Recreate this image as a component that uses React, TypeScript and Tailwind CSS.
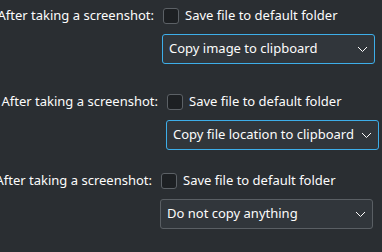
import React from "react";

function Chevron() {
  return (
    <svg width="11" height="7" viewBox="0 0 11 7" className="shrink-0">
      <path d="M1 1 L5.5 5.5 L10 1" fill="none" stroke="#fcfcfc" strokeWidth="1" />
    </svg>
  );
}

function Section({ offset, top, focused, value }: { offset: string; top: string; focused?: boolean; value: string }) {
  return (
    <div className={`flex ${offset} ${top}`}>
      <div className="w-[162px] shrink-0 h-4 flex items-center justify-end pr-[8px] whitespace-nowrap">
        After taking a screenshot:
      </div>
      <div className="flex flex-col">
        <div className="flex items-center h-4 gap-[6px] pl-[1px]">
          <span className="w-4 h-4 rounded-[3px] border border-[#5c6166] bg-[#1d2023]" />
          <span className="whitespace-nowrap">Save file to default folder</span>
        </div>
        <div
          className={`mt-[10px] w-[213px] h-[30px] rounded-[3px] border bg-[#31363b] flex items-center justify-between pl-[6px] pr-[6px] ${
            focused ? "border-[#3daee9]" : "border-[#5a5f64]"
          }`}
        >
          <span className="whitespace-nowrap">{value}</span>
          <Chevron />
        </div>
      </div>
    </div>
  );
}

export default function App() {
  return (
    <div className="w-[382px] h-[252px] overflow-hidden bg-[#2a2e32] text-[#fcfcfc] text-[13px] font-['Noto_Sans',sans-serif]">
      <Section offset="ml-0" top="pt-[8px]" focused value="Copy image to clipboard" />
      <Section offset="ml-[4px]" top="pt-[30px]" focused value="Copy file location to clipboard" />
      <Section offset="ml-[-2px]" top="pt-[23px]" value="Do not copy anything" />
    </div>
  );
}
